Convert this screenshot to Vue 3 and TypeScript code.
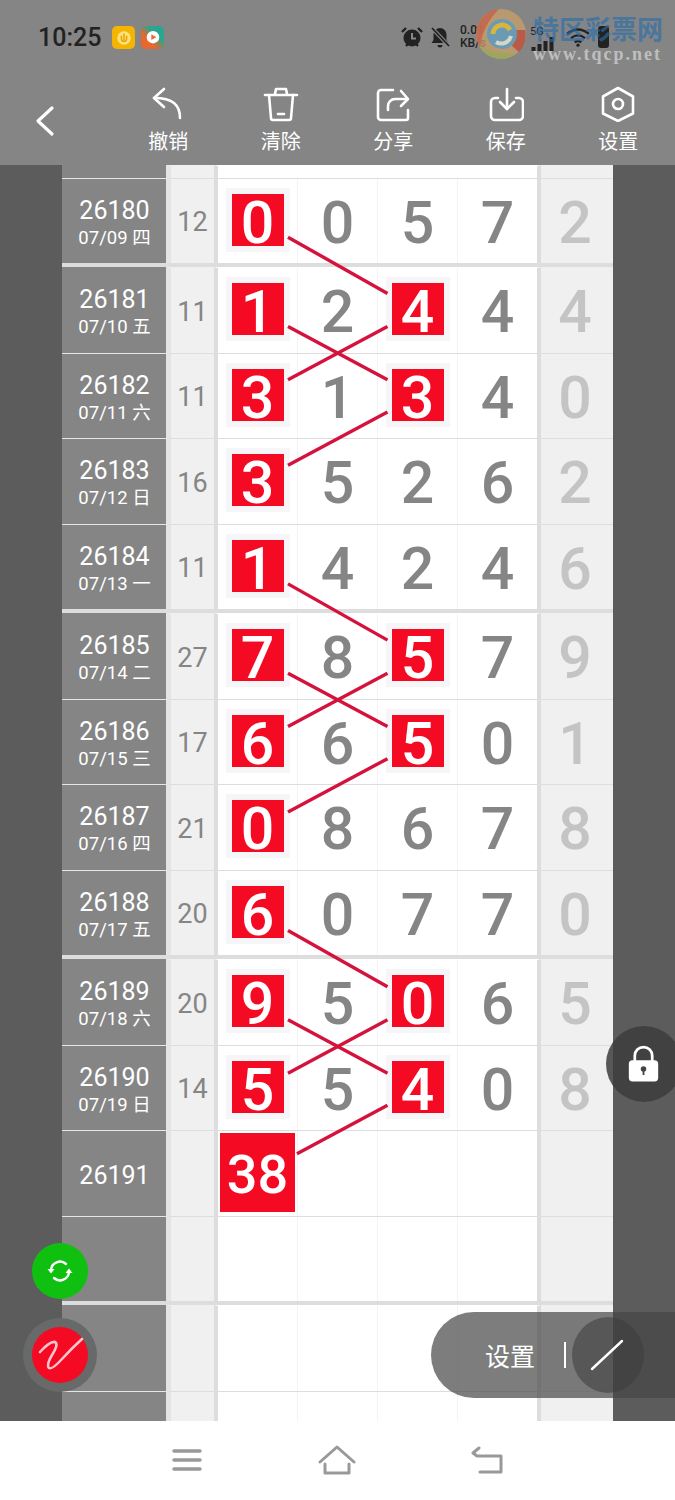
<template>
  <div class="phone">
    <header class="top">
      <div class="status">
        <span class="time">10:25</span>
        <span class="app-icon app-yellow">
          <svg viewBox="0 0 24 24" width="18" height="18"><circle cx="12" cy="12" r="9" fill="#ffe27a" /><path d="M12 6v9M8.500 9v4a3.500 3.500 0 0 0 7 0V9" fill="none" stroke="#e6a400" stroke-width="2" /></svg>
        </span>
        <span class="app-icon app-video">
          <svg viewBox="0 0 24 24" width="20" height="20"><circle cx="12" cy="11" r="7.500" fill="#fff" /><path d="M10 7.500l6 3.500-6 3.500z" fill="#ec6b3c" /></svg>
        </span>
        <div class="status-right">
          <svg class="st-icon" viewBox="0 0 24 24" width="24" height="24">
            <circle cx="12" cy="13" r="8.500" fill="#222" />
            <path d="M12 8v5.500h4" fill="none" stroke="#888" stroke-width="2" />
            <path d="M2 7l4-4M22 7l-4-4M6 21l2-2M18 21l-2-2" stroke="#222" stroke-width="2.400" />
          </svg>
          <svg class="st-icon" viewBox="0 0 24 24" width="24" height="24">
            <path d="M12 3a6.500 6.500 0 0 0-6.500 6.500V15L3.500 18h17l-2-3V9.500A6.500 6.500 0 0 0 12 3zM9.500 20a2.500 2.500 0 0 0 5 0z" fill="#222" />
            <path d="M4 3l17 18" stroke="#888" stroke-width="4" />
            <path d="M4 3l17 18" stroke="#222" stroke-width="1.800" />
          </svg>
          <div class="speed"><span>0.01</span><span>KB/s</span></div>
          <div class="signal">
            <span class="net">5G</span>
            <svg viewBox="0 0 24 14" width="25" height="14">
              <path d="M1 14h4V10H1zM7 14h4V7H7zM13 14h4V4h-4zM19 14h4V0h-4z" fill="#222" />
            </svg>
          </div>
          <svg viewBox="0 0 24 18" width="26" height="20" class="st-icon wifi">
            <path d="M2 6q10-8 20 0M5.500 10q6.500-5 13 0M9 14q3-2.500 6 0" fill="none" stroke="#222" stroke-width="2.200" />
            <circle cx="12" cy="16.500" r="1.500" fill="#222" />
          </svg>
          <span class="battery"></span>
        </div>
        <div class="brand">
          <svg class="brand-logo" viewBox="0 0 52 52" width="52" height="52">
            <circle cx="26" cy="26" r="25" fill="#c9a06a" opacity=".75" />
            <path d="M24 1a25 25 0 0 0-19 38q3-22 19-38z" fill="#c5604a" opacity=".8" />
            <path d="M5 39a25 25 0 0 0 36 7Q20 46 5 39z" fill="#9aa85a" opacity=".9" />
            <path d="M50 22a25 25 0 0 1-6 22l-7-6q5-8 3-16z" fill="#b8503e" opacity=".85" />
            <circle cx="27" cy="26" r="15" fill="#6b9ab4" />
            <path d="M18 26a9 9 0 0 1 17-4" fill="none" stroke="#d8b53c" stroke-width="5" />
            <path d="M36 28a10 10 0 0 1-15 6" fill="none" stroke="#d4d6c8" stroke-width="4" />
          </svg>
          <div class="brand-text">
            <span class="brand-name">特区彩票网</span>
            <span class="brand-url">www.tqcp.net</span>
          </div>
        </div>
      </div>
      <div class="toolbar">
        <svg class="back" viewBox="0 0 24 36" width="24" height="36"><path d="M19 5L5 18l14 13" fill="none" stroke="#fff" stroke-width="3.200" stroke-linecap="round" stroke-linejoin="round" /></svg>
        <div class="tools">
          <div v-for="t in tools" :key="t.label" class="tool">
            <svg viewBox="0 0 36 36" width="36" height="36" fill="none" stroke="#fff" stroke-width="2.600" stroke-linecap="round" stroke-linejoin="round">
              <path v-for="(d, i) in t.paths" :key="i" :d="d" />
            </svg>
            <span>{{ t.label }}</span>
          </div>
        </div>
      </div>
    </header>

    <main class="board">
      <div class="grid">
        <div class="row row-top">
          <div class="c-date"></div><div class="c-sum"></div><div class="c-main"></div><div class="c-last"></div>
        </div>
        <div v-for="r in rows" :key="r.key" class="row" :class="{ 'group-end': r.groupEnd }">
          <div class="c-date">
            <span class="issue">{{ r.issue }}</span>
            <span v-if="r.date" class="date">{{ r.date }}</span>
          </div>
          <div class="c-sum">{{ r.sum }}</div>
          <div class="c-main">
            <div v-for="(d, i) in r.digits" :key="i" class="cell">
              <span v-if="r.marks.includes(i)" class="mark" :class="{ big: String(d).length > 1 }">{{ d }}</span>
              <template v-else>{{ d }}</template>
            </div>
          </div>
          <div class="c-last">{{ r.last }}</div>
        </div>
      </div>
      <svg class="links" width="675" height="1256">
        <line v-for="(l, i) in links" :key="i" :x1="l.x1" :y1="l.y1" :x2="l.x2" :y2="l.y2" stroke="#d5123c" stroke-width="3.400" />
      </svg>

      <div class="fab fab-green">
        <svg viewBox="0 0 32 32" width="32" height="32" fill="none" stroke="#fff" stroke-width="2.400" stroke-linecap="round">
          <path d="M7 15a9 9 0 0 1 15-6" />
          <path d="M25 17a9 9 0 0 1-15 6" />
          <path d="M3.500 14h7L7 18.500z" fill="#fff" stroke="none" />
          <path d="M21.500 18h7L25 13.500z" fill="#fff" stroke="none" />
        </svg>
      </div>
      <div class="fab-ring">
        <div class="fab fab-red">
          <svg viewBox="0 0 56 56" width="56" height="56" fill="none" stroke="#ffc4cc" stroke-width="2.600" stroke-linecap="round" stroke-linejoin="round">
            <path d="M8 25Q18 14 23 15q4 2-3 13-6 10-3 13 3 2 13-9t20-20" />
          </svg>
        </div>
      </div>
      <div class="lock">
        <svg viewBox="0 0 36 42" width="36" height="42">
          <path d="M8.500 19v-7a9.500 9.500 0 0 1 19 0v7" fill="none" stroke="#fff" stroke-width="3" />
          <rect x="2" y="17" width="32" height="23" rx="4" fill="#fff" />
          <circle cx="18" cy="26.500" r="3" fill="#444" />
          <path d="M18 27v6" stroke="#444" stroke-width="2" />
        </svg>
      </div>
      <div class="pen-bar">
        <span class="pen-label">设置</span>
        <span class="pen-sep"></span>
        <div class="pen-knob">
          <svg viewBox="0 0 40 36" width="40" height="36"><path d="M4 32L34 4" stroke="#fff" stroke-width="2.400" stroke-linecap="round" /></svg>
        </div>
      </div>
    </main>

    <footer class="nav">
      <svg viewBox="0 0 32 28" width="32" height="28"><path d="M3 5h26M3 14h26M3 23h26" stroke="#999" stroke-width="3.400" stroke-linecap="round" /></svg>
      <svg viewBox="0 0 38 30" width="38" height="30" fill="none" stroke="#999" stroke-width="3" stroke-linecap="round" stroke-linejoin="round"><path d="M2 17L19 2l17 15M7 19v9h24v-9" /></svg>
      <svg viewBox="0 0 34 30" width="34" height="30" fill="none" stroke="#999" stroke-width="3" stroke-linecap="round" stroke-linejoin="round"><path d="M8 3L2 8l4 3h24v16H9" /></svg>
    </footer>
  </div>
</template>

<script setup lang="ts">
type Row = {
  key: string;
  issue: string;
  date: string;
  sum: string;
  digits: (number | string)[];
  marks: number[];
  last: string;
  groupEnd: boolean;
};

const tools = [
  { label: '撤销', paths: ['M14 3L4 12l10 9', 'M4 12q14 0 20 5t6 15'] },
  { label: '清除', paths: ['M2 9h32', 'M12 8l1-5h10l1 5', 'M6 9l2 23a2 2 0 0 0 2 2h16a2 2 0 0 0 2-2l2-23', 'M15 28h6'] },
  { label: '分享', paths: ['M18 4H6a3 3 0 0 0-3 3v24a3 3 0 0 0 3 3h25a2 2 0 0 0 2-2V24', 'M13 24v-4a7 7 0 0 1 7-7h12', 'M26 5l7 8-7 7'] },
  { label: '保存', paths: ['M10 12H7a4 4 0 0 0-4 4v14a4 4 0 0 0 4 4h24a4 4 0 0 0 4-4V16a4 4 0 0 0-4-4h-3', 'M19 3v20', 'M12 16l7 7 7-7'] },
  { label: '设置', paths: ['M18 2l15 8.500v17L18 35 3 27.500v-17z', 'M18 13a5 5 0 1 0 0 10 5 5 0 0 0 0-10z'] },
];

const raw: [string, string, string, string, number[], string][] = [
  ['26180', '07/09 四', '12', '0057', [0], '2'],
  ['26181', '07/10 五', '11', '1244', [0, 2], '4'],
  ['26182', '07/11 六', '11', '3134', [0, 2], '0'],
  ['26183', '07/12 日', '16', '3526', [0], '2'],
  ['26184', '07/13 一', '11', '1424', [0], '6'],
  ['26185', '07/14 二', '27', '7857', [0, 2], '9'],
  ['26186', '07/15 三', '17', '6650', [0, 2], '1'],
  ['26187', '07/16 四', '21', '0867', [0], '8'],
  ['26188', '07/17 五', '20', '6077', [0], '0'],
  ['26189', '07/18 六', '20', '9506', [0, 2], '5'],
  ['26190', '07/19 日', '14', '5540', [0, 2], '8'],
];

const groupEnds = new Set([0, 4, 8, 12]);

const rows: Row[] = raw.map((r, i) => ({
  key: r[0],
  issue: r[0],
  date: r[1],
  sum: r[2],
  digits: r[3].split(''),
  marks: r[4],
  last: r[5],
  groupEnd: groupEnds.has(i),
}));
rows.push({ key: '26191', issue: '26191', date: '', sum: '', digits: [38, '', '', ''], marks: [0], last: '', groupEnd: false });
for (let i = 12; i < 15; i++) {
  rows.push({ key: 'blank' + i, issue: '', date: '', sum: '', digits: ['', '', '', ''], marks: [], last: '', groupEnd: groupEnds.has(i) });
}

// row centres inside the board, same numbers as the row heights in the css
const rowH = 85.5;
const sep = 4.67;
const centers: number[] = [];
let y = 12.5;
rows.forEach((r) => {
  centers.push(y + rowH / 2);
  y += rowH + (r.groupEnd ? sep : 0);
});

const colX = [258, 417.5];
const pairs: [number, number][] = [
  [0, 1], [1, 2], [2, 1], [3, 2], [4, 5], [5, 6], [6, 5], [7, 6], [8, 9], [9, 10], [10, 9], [11, 10],
];
const links = pairs.map(([from, to]) => {
  const cy1 = centers[from];
  const cy2 = centers[to];
  const slope = (cy2 - cy1) / (colX[1] - colX[0]);
  const startDx = from === 11 ? 39 : 30;
  return {
    x1: colX[0] + startDx,
    y1: cy1 + slope * startDx,
    x2: colX[1] - 30,
    y2: cy2 - slope * 30,
  };
});
</script>

<style scoped>
.phone {
  width: 675px;
  height: 1500px;
  display: flex;
  flex-direction: column;
  overflow: hidden;
  font-family: Roboto, "Noto Sans CJK SC", sans-serif;
  background: #fff;
}

.top {
  height: 165px;
  background: #858585;
  color: #fff;
  flex: none;
}

.status {
  height: 76px;
  display: flex;
  align-items: flex-start;
  padding: 22px 0 0 38px;
  box-sizing: border-box;
  position: relative;
}
.time {
  font-size: 25px;
  line-height: 32px;
  font-weight: 500;
  color: #222;
  width: 74px;
}
.app-icon {
  width: 23px;
  height: 23px;
  border-radius: 5px;
  margin: 4px 6px 0 0;
  display: flex;
  align-items: center;
  justify-content: center;
}
.app-yellow { background: #f5b400; }
.app-video { background: linear-gradient(225deg, #2aa58e 35%, #e8672e 65%); }

.status-right {
  position: absolute;
  left: 400px;
  top: 23px;
  display: flex;
  align-items: center;
  height: 28px;
  gap: 4px;
}
.st-icon { flex: none; }
.speed {
  display: flex;
  flex-direction: column;
  font-size: 12px;
  line-height: 13px;
  font-weight: 500;
  color: #222;
  width: 66px;
  margin-left: 4px;
}
.signal {
  display: flex;
  flex-direction: column;
  width: 29px;
  margin-top: 2px;
}
.net {
  font-size: 11px;
  line-height: 11px;
  color: #222;
}
.wifi { margin-left: 2px; }
.battery {
  width: 11px;
  height: 22px;
  background: #222;
  border-radius: 3px;
  margin-left: 3px;
}

.brand {
  position: absolute;
  left: 475px;
  top: 8px;
  display: flex;
  width: 200px;
}
.brand-logo { flex: none; }
.brand-text {
  display: flex;
  flex-direction: column;
  margin: 7px 0 0 6px;
}
.brand-name {
  font-size: 26px;
  line-height: 30px;
  font-weight: 700;
  color: rgba(40, 110, 170, 0.65);
  white-space: nowrap;
}
.brand-url {
  font-family: "Liberation Serif", serif;
  font-size: 18px;
  line-height: 18px;
  font-weight: 700;
  letter-spacing: 2px;
  color: rgba(225, 225, 225, 0.65);
  white-space: nowrap;
}

.toolbar {
  display: flex;
  align-items: flex-start;
  height: 89px;
  position: relative;
}
.back {
  position: absolute;
  left: 33px;
  top: 27px;
}
.tools {
  margin-left: 112px;
  display: flex;
}
.tool {
  width: 112.500px;
  display: flex;
  flex-direction: column;
  align-items: center;
  gap: 8px;
  font-size: 20px;
  line-height: 24px;
  margin-top: 10px;
}

.board {
  position: relative;
  height: 1256px;
  flex: none;
  overflow: hidden;
  background: #5c5c5c;
}
.grid {
  margin-left: 62px;
  width: 551px;
  background: #fff;
}
.row {
  display: flex;
  height: 85.500px;
  box-sizing: content-box;
}
.row.row-top { height: 12.500px; }
.row.group-end { border-bottom: 4.670px solid #ddd; }

.row > div { box-sizing: border-box; border-top: 1.500px solid #ddd; }
.row-top > div,
.row.group-end + .row > div { border-top-color: transparent; }

.c-date {
  width: 104px;
  background: #858585;
  color: #fff;
  display: flex;
  flex-direction: column;
  align-items: center;
  justify-content: center;
  padding: 5px 0 0 1px;
}
.row > .c-date { border-top-color: #e6e6e6; }
.row-top > .c-date,
.row.group-end + .row > .c-date { border-top-color: transparent; }
.issue {
  font-size: 25px;
  line-height: 30px;
}
.date {
  font-size: 18.500px;
  line-height: 25px;
}
.c-sum {
  width: 48px;
  background: #f0f0f0;
  border-left: 5px solid #e4e4e4;
  color: #858585;
  font-size: 27px;
  display: flex;
  align-items: center;
  justify-content: center;
  padding-top: 3px;
}
.c-main {
  width: 327px;
  display: flex;
  background: #fff;
  border-left: 4px solid #ddd;
  border-right: 4px solid #ddd;
}
.cell {
  flex: 1;
  display: flex;
  align-items: center;
  justify-content: center;
  color: #858585;
  font-size: 59px;
  font-weight: 500;
  padding-top: 3px;
  box-sizing: border-box;
  border-left: 1px solid #f3f3f3;
  position: relative;
}
.cell:first-child { border-left: 0; }
.mark {
  width: 52px;
  height: 52px;
  margin-top: -5px;
  padding-top: 5px;
  box-sizing: border-box;
  background: #f50a23;
  color: #fff;
  display: flex;
  align-items: center;
  justify-content: center;
  box-shadow: 0 0 0 6px #f6f6f8;
  position: relative;
  z-index: 2;
}
.mark.big {
  width: 75px;
  height: 79px;
  margin-top: -4px;
  padding-top: 3px;
  font-size: 54px;
  box-shadow: none;
}
.c-last {
  width: 72px;
  background: #f0f0f0;
  color: #c4c4c4;
  font-size: 59px;
  font-weight: 500;
  display: flex;
  align-items: center;
  justify-content: center;
  padding: 3px 4px 0 0;
}

.links {
  position: absolute;
  left: 0;
  top: 0;
  z-index: 3;
  pointer-events: none;
}

.fab {
  border-radius: 50%;
  width: 56px;
  height: 56px;
  display: flex;
  align-items: center;
  justify-content: center;
}
.fab-green {
  position: absolute;
  left: 32px;
  top: 1078px;
  background: #10c010;
  z-index: 4;
}
.fab-ring {
  position: absolute;
  left: 23px;
  top: 1153px;
  width: 74px;
  height: 74px;
  border-radius: 50%;
  background: #686a6a;
  display: flex;
  align-items: center;
  justify-content: center;
  z-index: 4;
}
.fab-red { background: #f50a23; }

.lock {
  position: absolute;
  left: 606px;
  top: 861px;
  width: 76px;
  height: 76px;
  border-radius: 50%;
  background: rgba(60, 60, 60, 0.85);
  display: flex;
  align-items: center;
  justify-content: center;
  padding-right: 1px;
  box-sizing: border-box;
  z-index: 4;
}
.lock svg { width: 33px; height: 40px; }

.pen-bar {
  position: absolute;
  left: 431px;
  top: 1147px;
  width: 244px;
  height: 86px;
  border-radius: 43px 0 0 43px;
  background: rgba(70, 70, 70, 0.7);
  display: flex;
  align-items: center;
  color: #fff;
  font-size: 25px;
  z-index: 4;
}
.pen-label { margin-left: 54px; }
.pen-sep {
  width: 2px;
  height: 26px;
  background: #fff;
  margin-left: 29px;
}
.pen-knob {
  width: 72px;
  height: 76px;
  border-radius: 50%;
  background: rgba(60, 60, 60, 0.55);
  margin-left: 6px;
  display: flex;
  align-items: center;
  justify-content: center;
}

.nav {
  flex: none;
  height: 79px;
  background: #fff;
  display: flex;
  align-items: center;
  justify-content: center;
  gap: 115px;
  padding-bottom: 2px;
  box-sizing: border-box;
}
</style>
